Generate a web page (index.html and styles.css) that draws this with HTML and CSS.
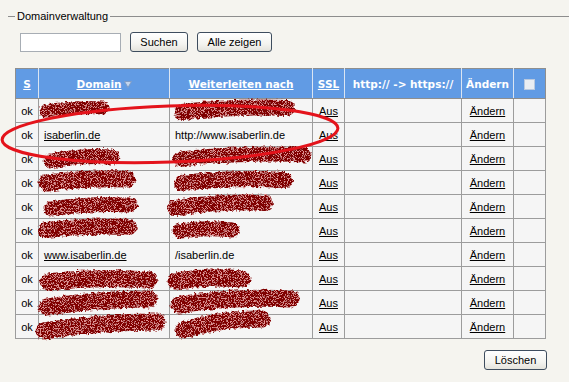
FILE: index.html
```html
<!DOCTYPE html>
<html lang="de">
<head>
  <meta charset="UTF-8">
  <title>Domainverwaltung</title>
  <link rel="stylesheet" href="styles.css">
</head>
<body>
  <fieldset class="panel">
    <legend>Domainverwaltung</legend>
    <div class="search-row">
      <input type="text" class="search-input" aria-label="Suche">
      <button class="xp-btn btn-search">Suchen</button>
      <button class="xp-btn btn-all">Alle zeigen</button>
    </div>

    <div class="table-wrap">
      <table class="domains">
        <colgroup>
          <col class="col-s"><col class="col-domain"><col class="col-target"><col class="col-ssl"><col class="col-https"><col class="col-edit"><col class="col-check">
        </colgroup>
        <thead>
          <tr>
            <th><a href="#">S</a></th>
            <th><a href="#">Domain</a><svg class="sort" width="8" height="7" viewBox="0 0 8 7"><polygon points="0.5,0.5 7.5,0.5 4,6.5" fill="#c3d5ee" stroke="#7f9cc6"/></svg></th>
            <th><a href="#">Weiterleiten nach</a></th>
            <th><a href="#">SSL</a></th>
            <th>http:// -&gt; https://</th>
            <th>Ändern</th>
            <th><input type="checkbox" class="check-all" disabled aria-label="Alle"></th>
          </tr>
        </thead>
        <tbody>
          <tr><td>ok</td><td></td><td></td><td class="c"><a href="#">Aus</a></td><td></td><td class="c"><a href="#">Ändern</a></td><td></td></tr>
          <tr><td>ok</td><td><a href="#">isaberlin.de</a></td><td>http://www.isaberlin.de</td><td class="c"><a href="#">Aus</a></td><td></td><td class="c"><a href="#">Ändern</a></td><td></td></tr>
          <tr><td>ok</td><td></td><td></td><td class="c"><a href="#">Aus</a></td><td></td><td class="c"><a href="#">Ändern</a></td><td></td></tr>
          <tr><td>ok</td><td></td><td></td><td class="c"><a href="#">Aus</a></td><td></td><td class="c"><a href="#">Ändern</a></td><td></td></tr>
          <tr><td>ok</td><td></td><td></td><td class="c"><a href="#">Aus</a></td><td></td><td class="c"><a href="#">Ändern</a></td><td></td></tr>
          <tr><td>ok</td><td></td><td></td><td class="c"><a href="#">Aus</a></td><td></td><td class="c"><a href="#">Ändern</a></td><td></td></tr>
          <tr><td>ok</td><td><a href="#">www.isaberlin.de</a></td><td>/isaberlin.de</td><td class="c"><a href="#">Aus</a></td><td></td><td class="c"><a href="#">Ändern</a></td><td></td></tr>
          <tr><td>ok</td><td></td><td></td><td class="c"><a href="#">Aus</a></td><td></td><td class="c"><a href="#">Ändern</a></td><td></td></tr>
          <tr><td>ok</td><td></td><td></td><td class="c"><a href="#">Aus</a></td><td></td><td class="c"><a href="#">Ändern</a></td><td></td></tr>
          <tr><td>ok</td><td></td><td></td><td class="c"><a href="#">Aus</a></td><td></td><td class="c"><a href="#">Ändern</a></td><td></td></tr>
        </tbody>
      </table>

      <!-- Schwärzungen + Markierung liegen über der Tabelle -->
      <svg class="marks" width="531" height="271" viewBox="0 0 531 271">
        <defs>
          <filter id="grain" x="-10%" y="-40%" width="120%" height="180%">
            <feTurbulence type="fractalNoise" baseFrequency="0.35" numOctaves="2" seed="3" result="wobble"/>
            <feDisplacementMap in="SourceGraphic" in2="wobble" scale="5" xChannelSelector="R" yChannelSelector="G" result="rough"/>
            <feTurbulence type="fractalNoise" baseFrequency="1.3" numOctaves="1" seed="7" result="noise"/>
            <feColorMatrix in="noise" type="matrix" values="0 0 0 0 0.78  0 0 0 0 0.3  0 0 0 0 0.3  0 0 0 -9 4.3" result="spots"/>
            <feComposite in="spots" in2="rough" operator="in" result="spotsIn"/>
            <feMerge><feMergeNode in="rough"/><feMergeNode in="spotsIn"/></feMerge>
          </filter>
        </defs>
        <g transform="translate(-15,-68)">
          <g class="scribble" filter="url(#grain)">
            <path d="M46 111 Q75 106 103 108" stroke-width="13"/>
            <path d="M182 112 Q235 106 287 108" stroke-width="16"/>
            <path d="M51 161 Q82 155 112 157" stroke-width="15"/>
            <path d="M180 159 Q240 152 304 155" stroke-width="15"/>
            <path d="M47 183 Q88 178 127 179" stroke-width="17"/>
            <path d="M182 183 Q235 177 285 180" stroke-width="16"/>
            <path d="M51 209 Q90 203 130 205" stroke-width="15"/>
            <path d="M175 208 Q220 201 265 203" stroke-width="16"/>
            <path d="M46 230 Q88 225 129 227" stroke-width="16"/>
            <path d="M180 231 Q206 227 232 230" stroke-width="15"/>
            <path d="M48 282 Q98 276 149 280" stroke-width="17"/>
            <path d="M176 281 Q209 276 242 279" stroke-width="17"/>
            <path d="M47 307 Q98 299 149 299" stroke-width="17"/>
            <path d="M179 305 Q235 296 291 299" stroke-width="17"/>
            <path d="M44 331 Q100 322 157 322" stroke-width="17"/>
            <path d="M184 330 Q222 318 262 319" stroke-width="17"/>
          </g>
          <ellipse class="ring" cx="170" cy="134" rx="168" ry="28" transform="rotate(-2 170 134)"/>
        </g>
      </svg>
    </div>

    <div class="actions">
      <button class="xp-btn btn-delete">Löschen</button>
    </div>
  </fieldset>
</body>
</html>
```

FILE: styles.css
```css
body {
  margin: 0;
  background: #f5f4ef;
  font-family: 'Liberation Sans', Arial, sans-serif;
  font-size: 11px;
  color: #000;
}
.panel {
  margin: 10px 0 0 8px;
  padding: 0 0 0 7px;
  border: none;
  border-top: 1px solid #8d8d8d;
  min-inline-size: 0;
}
.panel legend {
  padding: 0 2px;
  line-height: 13px;
  color: #000;
}
.search-row {
  display: flex;
  align-items: center;
  height: 20px;
  margin: 9px 0 0 5px;
}
.search-input {
  box-sizing: border-box;
  width: 101px;
  height: 19px;
  margin: 0 9px 0 0;
  border: 1px solid #a7adb4;
  background: #fff;
  font: inherit;
  padding: 0 2px;
}
.xp-btn {
  box-sizing: border-box;
  height: 20px;
  padding: 0;
  border: 1px solid #3e4d5e;
  border-radius: 3px;
  background: linear-gradient(#ffffff, #f4f4f0 60%, #e4e3dc);
  font-family: 'Liberation Sans', Arial, sans-serif;
  font-size: 11px;
  color: #000;
  cursor: pointer;
}
.btn-search { width: 58px; margin-right: 9px; }
.btn-all { width: 75px; }
.btn-delete { width: 63px; }

.table-wrap {
  position: relative;
  width: 531px;
  margin-top: 16px;
}
.domains {
  border-collapse: collapse;
  table-layout: fixed;
  width: 530px;
  background: #f5f5f5;
  border: 1px solid #8e8e8e;
}
.col-s { width: 23px; }
.col-domain { width: 131px; }
.col-target { width: 143px; }
.col-ssl { width: 32px; }
.col-https { width: 117px; }
.col-edit { width: 52px; }
.col-check { width: 32px; }
.domains th {
  height: 29px;
  padding: 0;
  background: #619be4;
  color: #fff;
  font-family: 'DejaVu Sans', Verdana, sans-serif;
  font-size: 10.5px;
  font-weight: bold;
  text-align: center;
  border-left: 1px solid #dbe5f2;
  border-bottom: 1px solid #8e8e8e;
  white-space: nowrap;
}
.domains th:first-child { border-left: none; }
.domains th a { color: #fff; }
.domains th .sort { margin-left: 2px; vertical-align: 0; }
.check-all {
  appearance: none;
  width: 11px;
  height: 11px;
  margin: 0;
  vertical-align: middle;
  background: #e9edf2;
  border: 1px solid #b9c9df;
}
.domains td {
  height: 23px;
  padding: 0 0 0 5px;
  border: 1px solid #9c9c9c;
  white-space: nowrap;
  overflow: hidden;
}
.domains td:first-child,
.domains td.c {
  text-align: center;
  padding: 0;
}
.domains td a { color: #000; }

.marks {
  position: absolute;
  left: 0;
  top: 0;
  overflow: visible;
  pointer-events: none;
}
.scribble path {
  fill: none;
  stroke: #800000;
  stroke-linecap: round;
}
.ring {
  fill: none;
  stroke: #e4131b;
  stroke-width: 3;
}
.actions {
  display: flex;
  justify-content: flex-end;
  width: 532px;
  margin-top: 11px;
}
```
